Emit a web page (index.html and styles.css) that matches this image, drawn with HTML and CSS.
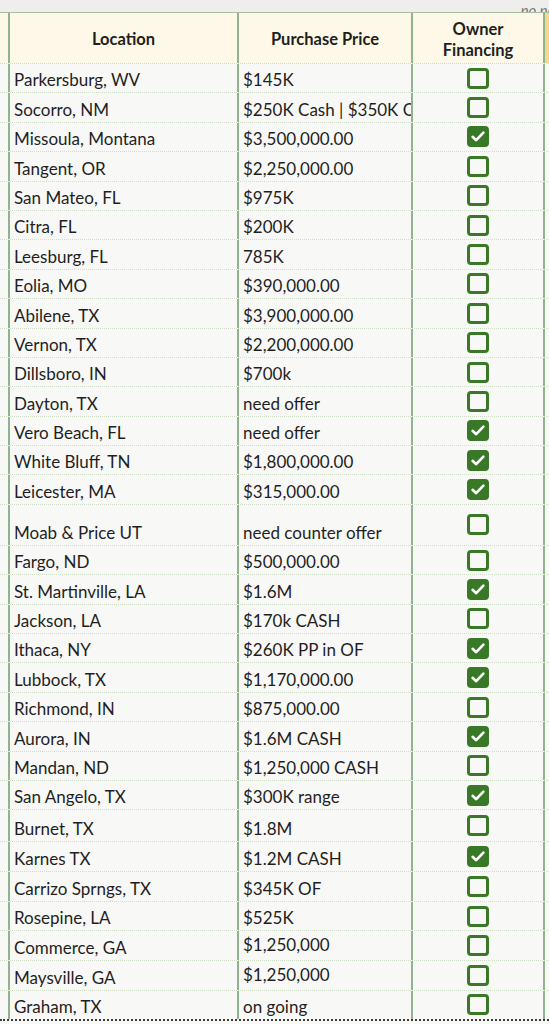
FILE: index.html
```html
<!DOCTYPE html>
<html>
<head>
<meta charset="utf-8">
<link rel="stylesheet" href="styles.css">
</head>
<body>
<div class="topband"><span class="note">no ne</span></div>
<div class="sheet">
  <div class="row head">
    <div class="c0"></div>
    <div class="c1 h">Location</div>
    <div class="c2 h">Purchase Price</div>
    <div class="c3 h">Owner<br>Financing</div>
    <div class="c4 gold"></div>
  </div>
  <div id="rows"></div>
</div>
<script src="app.js"></script>
</body>
</html>
```

FILE: app.js
```js
const data = [
  ["Parkersburg, WV","$145K",0],
  ["Socorro, NM","$250K Cash | $350K OF",0],
  ["Missoula, Montana","$3,500,000.00",1],
  ["Tangent, OR","$2,250,000.00",0],
  ["San Mateo, FL","$975K",0],
  ["Citra, FL","$200K",0],
  ["Leesburg, FL","785K",0],
  ["Eolia, MO","$390,000.00",0],
  ["Abilene, TX","$3,900,000.00",0],
  ["Vernon, TX","$2,200,000.00",0],
  ["Dillsboro, IN","$700k",0],
  ["Dayton, TX","need offer",0],
  ["Vero Beach, FL","need offer",1],
  ["White Bluff, TN","$1,800,000.00",1],
  ["Leicester, MA","$315,000.00",1],
  ["Moab & Price UT","need counter offer",0,"tall"],
  ["Fargo, ND","$500,000.00",0],
  ["St. Martinville, LA","$1.6M",1],
  ["Jackson, LA","$170k CASH",0],
  ["Ithaca, NY","$260K PP in OF",1],
  ["Lubbock, TX","$1,170,000.00",1],
  ["Richmond, IN","$875,000.00",0],
  ["Aurora, IN","$1.6M CASH",1],
  ["Mandan, ND","$1,250,000 CASH",0],
  ["San Angelo, TX","$300K range",1],
  ["Burnet, TX","$1.8M",0,"mid"],
  ["Karnes TX","$1.2M CASH",1,"r30"],
  ["Carrizo Sprngs, TX","$345K OF",0,"r30"],
  ["Rosepine, LA","$525K",0,"r30"],
  ["Commerce, GA","$1,250,000",0,"r30 up"],
  ["Maysville, GA","$1,250,000",0,"r30 up"],
  ["Graham, TX","on going",0,"r30 last"]
];
const host = document.getElementById("rows");
const check = '<svg class="tick" viewBox="0 0 16 15"><polyline points="2.6,7.8 6.2,11.2 13.4,3.6" fill="none" stroke="#fff" stroke-width="2.6" stroke-linecap="round" stroke-linejoin="round"/></svg>';
for (const [loc, price, on, cls] of data) {
  const r = document.createElement("div");
  r.className = "row data" + (cls ? " " + cls : "");
  r.innerHTML =
    '<div class="c0"></div>' +
    '<div class="c1 t"></div>' +
    '<div class="c2 t p"></div>' +
    '<div class="c3 box"><span class="cb' + (on ? " on" : "") + '">' + (on ? check : "") + '</span></div>' +
    '<div class="c4"></div>';
  r.querySelector(".c1").textContent = loc;
  r.querySelector(".c2").textContent = price;
  host.appendChild(r);
}
```

FILE: styles.css
```css
html, body {
  margin: 0;
  padding: 0;
  background: #f8f8f6;
}
body {
  width: 549px;
  height: 1024px;
  overflow: hidden;
  font-family: Lato, "Liberation Sans", sans-serif;
  color: #1f1f1f;
}
.topband {
  height: 12px;
  background: #efeeec;
  overflow: hidden;
  text-align: right;
  border-bottom: 1px solid #a3bf9f;
}
.note {
  display: inline-block;
  margin-top: -10px;
  margin-right: -6px;
  font-style: italic;
  font-size: 15px;
  color: #7a7a7a;
  line-height: 16px;
}
.row {
  display: grid;
  grid-template-columns: 8px 229px 174px 132px 1fr;
  border-bottom: 1px dotted #cfdfc8;
  box-sizing: border-box;
}
.row > div {
  box-sizing: border-box;
}
.c1, .c2, .c3, .c4 {
  border-left: 2px solid #8fb38c;
}
.head {
  height: 51px;
  background: #fdf8e7;
}
.head .gold {
  background: #f8d88e;
}
.h {
  display: flex;
  align-items: center;
  justify-content: center;
  text-align: center;
  font-weight: 700;
  font-size: 16.5px;
  line-height: 21px;
  padding-top: 3px;
}
.data {
  height: 29.4px;
}
.data.tall { height: 41px; }
.data.mid { height: 32px; }
.data.r30 { height: 29.7px; }
.data.last {
  border-bottom: 2px dotted #3a3a3a;
}
.t {
  display: flex;
  align-items: flex-end;
  padding: 0 0 2px 4px;
  font-size: 17px;
  line-height: 20px;
  white-space: nowrap;
  overflow: hidden;
}
.up .p {
  padding-bottom: 5px;
}
.box {
  display: flex;
  align-items: center;
  justify-content: center;
}
.cb {
  width: 22px;
  height: 21px;
  box-sizing: border-box;
  border: 3px solid #387826;
  border-radius: 4px;
  display: flex;
  align-items: center;
  justify-content: center;
}
.cb.on {
  background: #387826;
}
.tick {
  width: 16px;
  height: 15px;
  display: block;
}
```
